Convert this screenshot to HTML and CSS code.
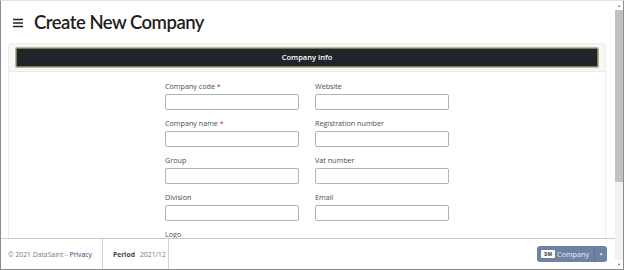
FILE: index.html
```html
<!DOCTYPE html>
<html>
  <head>
    <title>Create New Company</title>
    <link rel="stylesheet" href="styles.css">
  </head>
  <body>
    <div class="window">
      <div class="viewport">
        <div class="page">
          <div class="page-header">
            <svg class="menu-icon" width="10" height="10" viewBox="0 0 10 10">
              <path d="M0 1.5H10M0 5H10M0 8.5H10" stroke="#222" stroke-width="1.6" />
            </svg>
            <h1>Create New Company</h1>
          </div>

          <div class="card">
            <div class="card-header">
              <div class="section-bar">Company Info</div>
            </div>
            <div class="card-body">
              <form class="company-form">
                <div class="field">
                  <label>Company code <span class="req">*</span></label>
                  <input type="text" />
                </div>
                <div class="field">
                  <label>Website</label>
                  <input type="text" />
                </div>
                <div class="field">
                  <label>Company name <span class="req">*</span></label>
                  <input type="text" />
                </div>
                <div class="field">
                  <label>Registration number</label>
                  <input type="text" />
                </div>
                <div class="field">
                  <label>Group</label>
                  <input type="text" />
                </div>
                <div class="field">
                  <label>Vat number</label>
                  <input type="text" />
                </div>
                <div class="field">
                  <label>Division</label>
                  <input type="text" />
                </div>
                <div class="field">
                  <label>Email</label>
                  <input type="text" />
                </div>
                <div class="field">
                  <label>Logo</label>
                  <input type="text" />
                </div>
              </form>
            </div>
          </div>
        </div>

        <footer class="footer">
          <div class="footer-copy">&copy; 2021 DataSaint - <a href="#">Privacy</a></div>
          <div class="footer-period"><b>Period</b> <span>2021/12</span></div>
          <div class="footer-spacer"></div>
          <div class="company-btn">
            <span class="btn-main"><span class="badge">DM</span>Company</span>
            <span class="btn-caret">&#9650;</span>
          </div>
        </footer>
      </div>

      <div class="scrollbar">
        <div class="arrow up">&#9650;</div>
        <div class="thumb"></div>
        <div class="track"></div>
        <div class="arrow down">&#9660;</div>
      </div>
    </div>
  </body>
</html>
```

FILE: styles.css
```css
html,
body {
  margin: 0;
  padding: 0;
}
body {
  font-family: "Open Sans", Arial, sans-serif;
  color: #333;
  background: #fff;
}
.window {
  width: 624px;
  height: 270px;
  box-sizing: border-box;
  display: flex;
  border: 1px solid #8c8c8c;
  border-top-color: #e2e2e2;
  overflow: hidden;
}
.viewport {
  flex: 1;
  position: relative;
  overflow: hidden;
}
.page {
  padding: 0 9px 0 7px;
}
.page-header {
  height: 42px;
  display: flex;
  align-items: center;
  padding-left: 5px;
}
.menu-icon {
  margin-right: 11px;
  margin-top: 2px;
}
h1 {
  margin: 0;
  font-family: Lato, "Open Sans", sans-serif;
  font-size: 18.5px;
  font-weight: 600;
  letter-spacing: -0.5px;
  color: #1e1e1e;
}
.card {
  border: 1px solid #ececec;
  border-radius: 3px;
}
.card-header {
  background-color: #f7f7f7;
  padding: 4px 7px 4px 7px;
  border-bottom: 1px solid #ebebeb;
}
.section-bar {
  height: 19px;
  box-sizing: border-box;
  background-color: #212529;
  border: 1px solid #7e7a58;
  box-shadow: 0 0 0 1px #bdb893;
  border-radius: 1px;
  color: #fff;
  font-size: 7.5px;
  font-weight: 600;
  line-height: 17px;
  text-align: center;
}
.card-body {
  padding: 8px 0 40px;
}
.company-form {
  display: grid;
  grid-template-columns: 134px 134px;
  column-gap: 16px;
  row-gap: 7px;
  justify-content: center;
}
.field label {
  display: block;
  font-size: 7.2px;
  line-height: 12px;
  color: #4d4d4d;
  margin-bottom: 2px;
}
.req {
  color: #e0182d;
}
.field input {
  display: block;
  width: 134px;
  height: 16px;
  box-sizing: border-box;
  border: 1px solid #a9b3c6;
  border-radius: 2px;
  margin: 0;
  padding: 0 4px;
}
.footer {
  position: absolute;
  left: 0;
  right: 0;
  bottom: 0;
  height: 31px;
  box-sizing: border-box;
  background: #fff;
  border-top: 1px solid #bfcadb;
  display: flex;
  align-items: stretch;
  font-size: 6.8px;
  color: #7a7a7a;
}
.footer-copy {
  width: 102px;
  box-sizing: border-box;
  padding-left: 7px;
  border-right: 1px solid #c9d2df;
  display: flex;
  align-items: center;
}
.footer-copy a {
  color: #2d4773;
  text-decoration: none;
  margin-left: 2px;
}
.footer-period {
  width: 66px;
  box-sizing: border-box;
  padding-left: 10px;
  border-right: 1px solid #c9d2df;
  display: flex;
  align-items: center;
}
.footer-period b {
  color: #444;
  margin-right: 5px;
}
.footer-spacer {
  flex: 1;
}
.company-btn {
  align-self: center;
  margin-right: 8px;
  height: 16px;
  display: flex;
  background-color: #6f82a4;
  border-radius: 3px;
  color: #e8edf5;
  font-size: 7.2px;
  overflow: hidden;
}
.btn-main {
  display: flex;
  align-items: center;
  padding: 0 5px 0 4px;
}
.badge {
  width: 14px;
  height: 8px;
  background: #fff;
  border-radius: 1px;
  color: #333;
  font-size: 4.5px;
  font-weight: 700;
  line-height: 8px;
  text-align: center;
  margin-right: 2px;
}
.btn-caret {
  width: 12px;
  border-left: 1px solid #5f7294;
  font-size: 4px;
  line-height: 16px;
  text-align: center;
  color: #fff;
}
.scrollbar {
  width: 8px;
  display: flex;
  flex-direction: column;
  background-color: #f1f1f1;
}
.arrow {
  height: 9px;
  font-size: 4px;
  line-height: 9px;
  text-align: center;
  color: #7d7d7d;
  background: #fff;
}
.thumb {
  height: 172px;
  background-color: #c1c1c1;
}
.track {
  flex: 1;
}
```
